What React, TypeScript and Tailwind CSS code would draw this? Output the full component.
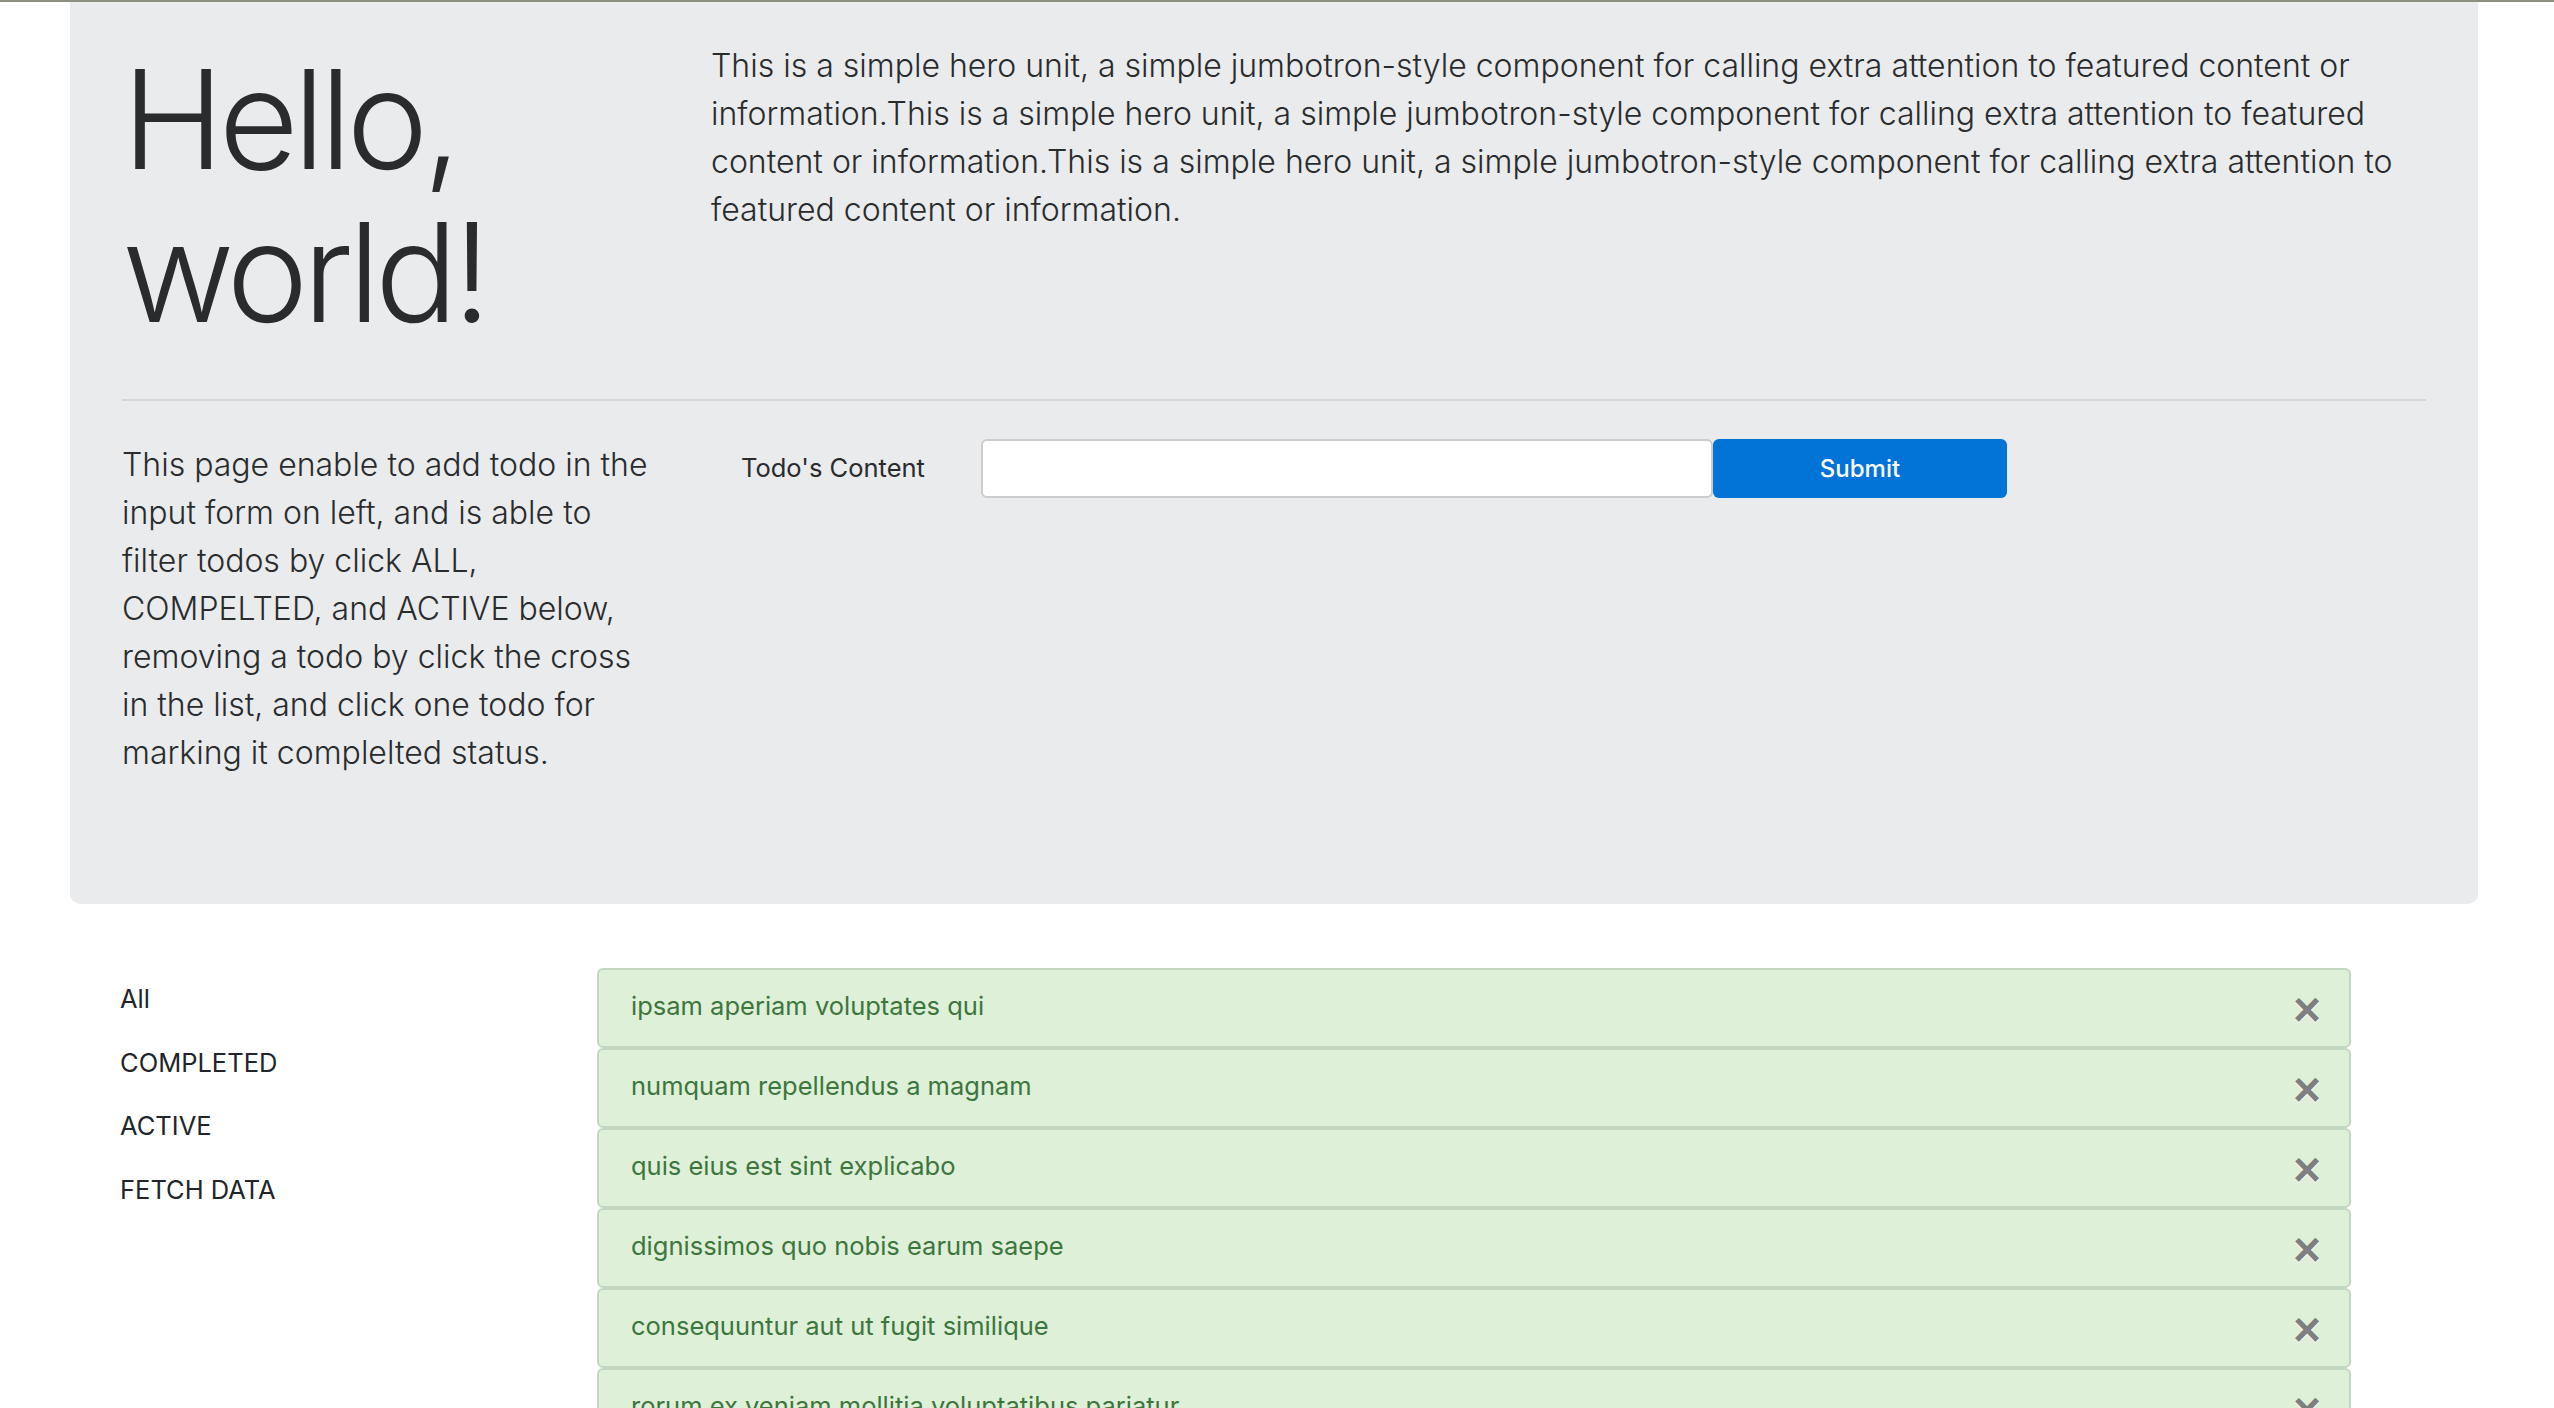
import React from "react"

const todos = [
  "ipsam aperiam voluptates qui",
  "numquam repellendus a magnam",
  "quis eius est sint explicabo",
  "dignissimos quo nobis earum saepe",
  "consequuntur aut ut fugit similique",
  "rorum ex veniam mollitia voluptatibus pariatur",
  "et fugit eligendi deleniti quidem qui sint nihil autem",
]

const filters = ["All", "COMPLETED", "ACTIVE", "FETCH DATA"]

function Hero() {
  return (
    <div className="ml-[70px] w-[2408px] bg-[#eaebed] rounded-b-[10px] px-[52px] pt-[40px] pb-[127px] text-[#292b2c]">
      <div className="grid grid-cols-[531px_1fr] gap-x-[58px] items-start">
        <h1 className="text-[138px] leading-[153px] font-light tracking-[-0.04em]">
          Hello, world!
        </h1>
        <p className="text-[32px] leading-[48px] font-light">
          This is a simple hero unit, a simple jumbotron-style component for calling extra attention to featured content or
          information.This is a simple hero unit, a simple jumbotron-style component for calling extra attention to featured
          content or information.This is a simple hero unit, a simple jumbotron-style component for calling extra attention to
          featured content or information.
        </p>
      </div>
      <hr className="mt-[51px] border-0 h-[2px] bg-[#d6d7d9]" />
      <div className="grid grid-cols-[531px_1fr] gap-x-[60px] mt-[40px] items-start">
        <p className="text-[32px] leading-[48px] font-light">
          This page enable to add todo in the input form on left, and is able to filter todos by click ALL,
          COMPELTED, and ACTIVE below, removing a todo by click the cross in the list, and click one todo for
          marking it complelted status.
        </p>
        <TodoForm />
      </div>
    </div>
  )
}

function TodoForm() {
  return (
    <form className="flex items-center -mt-[2px]" onSubmit={(e) => e.preventDefault()}>
      <label className="w-[268px] pl-[28px] text-[25.5px] text-[#292b2c]">Todo's Content</label>
      <input
        type="text"
        className="w-[732px] h-[59px] bg-white border-2 border-[#cccccc] rounded-[6px] px-4 text-[24px] outline-none"
      />
      <button
        type="submit"
        className="w-[294px] h-[59px] bg-[#0274d8] rounded-[6px] text-white text-[24px] font-medium"
      >
        Submit
      </button>
    </form>
  )
}

function TodoItem({ text }: { text: string }) {
  return (
    <li className="flex items-center justify-between h-[80px] bg-[#dff0d8] border-2 border-[#c3d6bf] rounded-[6px] pl-[32px] pr-[28px] pb-[4px]">
      <span className="text-[25.5px] text-[#3c763d]">{text}</span>
      <span className="mt-[7px] font-['Liberation_Sans',sans-serif] font-bold text-[48px] leading-none text-black/50 [text-shadow:0_1px_0_#fff]">
        ×
      </span>
    </li>
  )
}

export default function App() {
  return (
    <div className="w-full h-[1408px] overflow-hidden bg-white font-['Inter','Liberation_Sans',sans-serif]">
      <div className="h-[2px] w-full bg-[#8c917f]" />
      <Hero />
      <div className="flex items-start pt-[63px]">
        <ul className="w-[597px] pl-[120px] text-[25.5px] text-[#212529]">
          {filters.map((f) => (
            <li key={f} className="leading-[63.5px] cursor-pointer">
              {f}
            </li>
          ))}
        </ul>
        <ul className="w-[1754px] mt-[1px]">
          {todos.map((t) => (
            <TodoItem key={t} text={t} />
          ))}
        </ul>
      </div>
    </div>
  )
}
